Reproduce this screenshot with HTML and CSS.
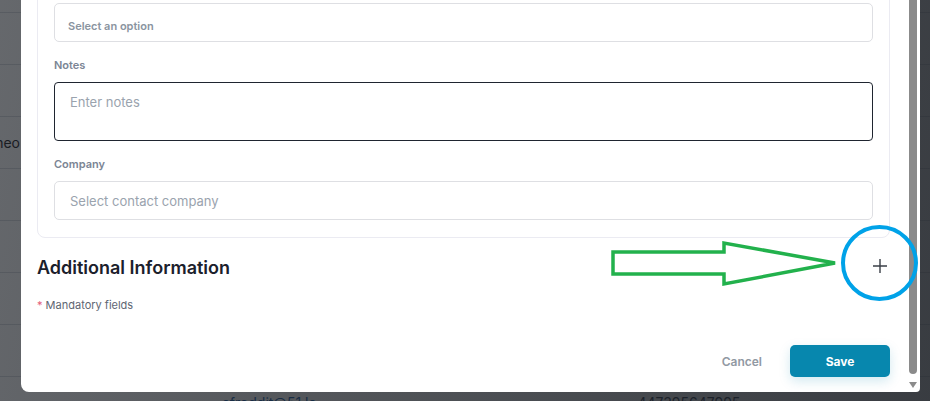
FILE: index.html
```html
<!DOCTYPE html>
<html lang="en">
<head>
<meta charset="utf-8">
<title>Contact form</title>
<link rel="stylesheet" href="styles.css">
</head>
<body>
<div class="page">
  <div class="bg-table">
    <div class="bg-row"></div>
    <div class="bg-row"></div>
    <div class="bg-row"><div class="cell-clip"><span class="bg-text">Vimeo</span></div></div>
    <div class="bg-row"></div>
    <div class="bg-row"></div>
    <div class="bg-row"></div>
    <div class="bg-row"></div>
    <div class="bg-row last">
      <span class="bg-link">afreddit@51.la</span>
      <span class="bg-phone">447395647995</span>
    </div>
  </div>
  <div class="backdrop"></div>

  <div class="modal">
    <div class="modal-scroll">
      <div class="modal-content">
        <section class="card">
          <div class="field">
            <div class="label">Type</div>
            <div class="control select">Select an option</div>
          </div>
          <div class="field">
            <div class="label">Notes</div>
            <div class="control textarea">Enter notes</div>
          </div>
          <div class="field">
            <div class="label">Company</div>
            <div class="control input">Select contact company</div>
          </div>
        </section>

        <div class="section-head">
          <h2 class="section-title">Additional Information</h2>
          <span class="add-btn">
            <svg width="16" height="16" viewBox="0 0 16 16" aria-hidden="true">
              <path d="M8 1v14M1 8h14" stroke="#3a3f47" stroke-width="1.4" fill="none"/>
            </svg>
          </span>
        </div>

        <p class="mandatory"><span class="star">*</span> Mandatory fields</p>

        <div class="footer">
          <button class="btn-cancel">Cancel</button>
          <button class="btn-save">Save</button>
        </div>
      </div>
    </div>
    <div class="scrollbar">
      <div class="thumb"></div>
      <div class="arrow-down"></div>
    </div>
  </div>

  <svg class="annot" width="930" height="401" viewBox="0 0 930 401" aria-hidden="true">
    <polygon points="613,252 724,252 724,243 835,263 724,284 724,274 613,274" fill="none" stroke="#22b14c" stroke-width="3.5" stroke-linejoin="miter"/>
    <ellipse cx="879.5" cy="263" rx="36.5" ry="36" fill="none" stroke="#00a2e8" stroke-width="4"/>
  </svg>
</div>
</body>
</html>
```

FILE: styles.css
```css
* { box-sizing: border-box; }

html, body {
  margin: 0;
  padding: 0;
  background: #ffffff;
}

body {
  font-family: Inter, "Noto Sans", "Liberation Sans", sans-serif;
}

.page {
  position: relative;
  width: 930px;
  height: 401px;
  overflow: hidden;
  background: #ffffff;
}

/* underlying page */
.bg-table {
  padding-top: 12px;
}

.bg-row {
  height: 52px;
  border-top: 1px solid #d9dce1;
  display: flex;
  align-items: center;
  font-size: 14px;
  color: #374151;
}

.cell-clip {
  width: 20px;
  display: flex;
  justify-content: flex-end;
  white-space: nowrap;
}

.bg-text {
  color: #1f2328;
}

.bg-link {
  margin-left: 222px;
  color: #1d5fa8;
  font-size: 14px;
}

.bg-phone {
  margin-left: 321px;
  color: #374151;
  font-size: 14px;
}

.backdrop {
  position: absolute;
  inset: 0;
  background: linear-gradient(100deg, rgba(22, 26, 32, 0.66) 0%, rgba(22, 26, 32, 0.74) 40%, rgba(22, 26, 32, 0.85) 100%);
}

/* modal */
.modal {
  position: absolute;
  left: 21px;
  top: 0;
  width: 899px;
  height: 392px;
  background: #ffffff;
  border-radius: 0 0 4px 8px;
  overflow: hidden;
  display: flex;
}

.modal-scroll {
  flex: 1;
  overflow: hidden;
}

/* scrolled position of the modal body */
.modal-content {
  margin-top: -55px;
  padding: 16px 19px 0 16px;
}

.card {
  border: 1px solid #ebebf2;
  border-radius: 8px;
  padding: 16px 16px 17px 16px;
}

.field {
  margin-bottom: 15px;
}

.field:last-child {
  margin-bottom: 0;
}

.label {
  font-size: 11px;
  line-height: 16px;
  font-weight: 600;
  color: #7b8594;
  margin-bottom: 9px;
}

.control {
  border: 1px solid #dedfe3;
  border-radius: 5px;
  color: #9aa3ae;
  font-size: 13px;
}

.select {
  height: 39px;
  padding: 7px 13px 0;
  display: flex;
  align-items: center;
  font-size: 11px;
  font-weight: 600;
  color: #8a94a0;
}

.textarea {
  height: 59px;
  padding: 11px 15px;
  line-height: 16px;
  border-color: #1f2530;
  border-radius: 4px;
}

.input {
  height: 39px;
  padding: 0 15px;
  display: flex;
  align-items: center;
}

.section-head {
  margin-top: 18px;
  display: flex;
  justify-content: space-between;
  align-items: flex-start;
}

.section-title {
  margin: 0;
  font-size: 18px;
  line-height: 24px;
  font-weight: 600;
  color: #1b202b;
}

.add-btn {
  display: block;
  width: 16px;
  height: 16px;
  margin-top: 2px;
  margin-right: 2px;
}

.add-btn svg {
  display: block;
}

.mandatory {
  margin: 17px 0 0 0;
  font-size: 11px;
  line-height: 16px;
  color: #5e6673;
}

.star {
  color: #e35d7a;
}

.footer {
  margin-top: 32px;
  display: flex;
  justify-content: flex-end;
  align-items: center;
  gap: 28px;
}

.btn-cancel {
  border: none;
  background: none;
  padding: 0;
  font-family: inherit;
  font-size: 12px;
  font-weight: 600;
  color: #9199a3;
}

.btn-save {
  width: 100px;
  height: 32px;
  border: none;
  border-radius: 5px;
  background: #0787ae;
  color: #ffffff;
  font-family: inherit;
  font-size: 12px;
  font-weight: 700;
  box-shadow: 0 4px 12px rgba(7, 135, 174, 0.18);
}

/* fake scrollbar */
.scrollbar {
  width: 11px;
  display: flex;
  flex-direction: column;
  align-items: flex-start;
}

.thumb {
  width: 8px;
  height: 374px;
  background: #8b8b8b;
  border-radius: 0 0 4px 4px;
}

.arrow-down {
  margin-top: 8px;
  width: 0;
  height: 0;
  border-left: 4px solid transparent;
  border-right: 4px solid transparent;
  border-top: 6px solid #8b8b8b;
}

.annot {
  position: absolute;
  left: 0;
  top: 0;
  pointer-events: none;
}
```
